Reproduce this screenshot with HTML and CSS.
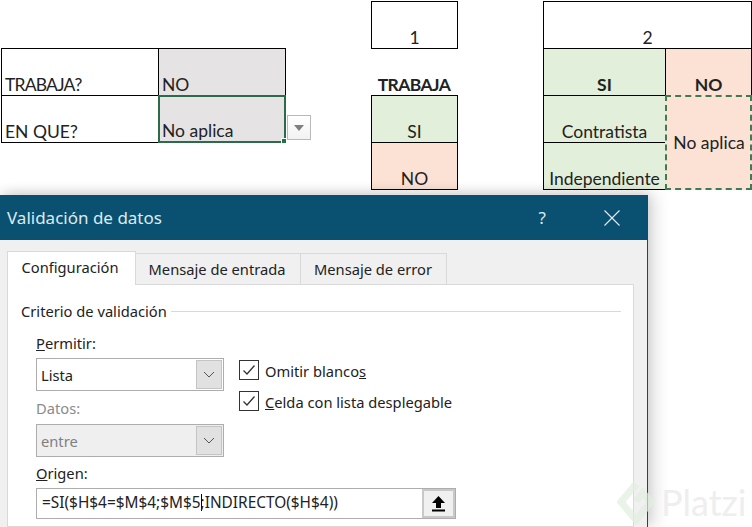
FILE: index.html
```html
<!DOCTYPE html>
<html lang="es">
<head>
<meta charset="utf-8">
<title>Validación de datos</title>
<link rel="stylesheet" href="styles.css">
</head>
<body>
<div class="page">
  <section class="sheet">
    <div class="cell c-num1">1</div>
    <div class="cell c-num2">2</div>

    <div class="cell caps c-a2">TRABAJA?</div>
    <div class="cell gray c-b2">NO</div>
    <div class="cell plain bold caps-bold c-d2">TRABAJA</div>
    <div class="cell green bold c-f2">SI</div>
    <div class="cell peach bold c-g2">NO</div>

    <div class="cell c-a3">EN QUE?</div>
    <div class="cell gray left selected c-b3">No aplica
      <span class="handle"></span>
      <span class="dropdown"><svg width="10" height="6" viewBox="0 0 10 6"><path d="M0 0h10L5 6z" fill="#7f7f7f"/></svg></span>
    </div>
    <div class="cell green c-d3">SI</div>
    <div class="cell green c-f3">Contratista</div>
    <div class="cell peach ants c-g3">No aplica</div>

    <div class="cell peach c-d4">NO</div>
    <div class="cell green c-f4">Independiente</div>
  </section>

  <section class="dialog">
    <header class="titlebar">
      <span class="title">Validación de datos</span>
      <span class="help">?</span>
      <svg class="close" width="16" height="16" viewBox="0 0 16 16"><path d="M.5.5l15 15M15.500.5l-15 15" stroke="#e4eef3" stroke-width="1.100" fill="none"/></svg>
    </header>
    <div class="tabs">
      <span class="tab active">Configuración</span>
      <span class="tab tab-input">Mensaje de entrada</span>
      <span class="tab tab-error">Mensaje de error</span>
    </div>
    <div class="panel">
      <div class="legend"><span>Criterio de validación</span><i class="rule"></i></div>
      <div class="form-top">
        <div class="col-left">
          <label class="label"><u>P</u>ermitir:</label>
          <div class="combo"><span>Lista</span><b class="combo-btn"><svg width="12" height="7" viewBox="0 0 12 7"><path d="M1 1l5 5 5-5" stroke="#555" fill="none"/></svg></b></div>
          <label class="label muted label-datos">Datos:</label>
          <div class="combo disabled"><span>entre</span><b class="combo-btn"><svg width="12" height="7" viewBox="0 0 12 7"><path d="M1 1l5 5 5-5" stroke="#555" fill="none"/></svg></b></div>
        </div>
        <div class="col-right">
          <div class="check"><span class="box"><svg width="14" height="12" viewBox="0 0 14 12"><path d="M1.500 6.500l3.500 3.500 7.500-8.500" stroke="#333" stroke-width="1.300" fill="none"/></svg></span><span class="check-text">Omitir blanco<u>s</u></span></div>
          <div class="check"><span class="box"><svg width="14" height="12" viewBox="0 0 14 12"><path d="M1.500 6.500l3.500 3.500 7.500-8.500" stroke="#333" stroke-width="1.300" fill="none"/></svg></span><span class="check-text"><u>C</u>elda con lista desplegable</span></div>
        </div>
      </div>
      <label class="label label-origen"><u>O</u>rigen:</label>
      <div class="source">
        <span class="source-text">=SI($H$4=$M$4;$M$5<i class="caret"></i>;INDIRECTO($H$4))</span>
        <b class="source-btn"><svg width="15" height="17" viewBox="0 0 15 17"><path d="M7.500 1L14 8H10v5H5V8H1z" fill="#000"/><path d="M1 15.500h13" stroke="#000" stroke-width="2"/></svg></b>
      </div>
    </div>
  </section>

  <div class="watermark">
    <svg width="38" height="44" viewBox="0 0 38 44"><path d="M19 4L4 22l15 18 15-18-8-9-7 8" stroke="#dfeedd" stroke-width="7" fill="none" opacity=".7"/></svg>
    <span>Platzi</span>
  </div>
</div>
</body>
</html>
```
FILE: styles.css
```css
* { box-sizing: border-box; }
html, body { margin: 0; height: 100%; background: #fff; overflow: hidden; }
.page { position: relative; width: 752px; height: 527px; overflow: hidden; }

/* Spreadsheet */
.sheet {
  height: 195px;
  padding: 1px 0 0 1px;
  display: grid;
  grid-template-columns: 157px 127px 86px 86px 86px 122px 86px;
  grid-template-rows: repeat(4, 47px);
  font-family: "Lato", sans-serif;
  font-size: 17.500px;
  color: #222;
}
.cell {
  position: relative;
  border: 1px solid #000;
  margin: 0 -1px -1px 0;
  display: flex;
  align-items: flex-end;
  justify-content: center;
  line-height: 20px;
}
.plain { border: 0; margin: 0; }
.bold { font-weight: 700; }
.caps { letter-spacing: -.8px; }
.caps-bold { letter-spacing: -.6px; }
.gray { background: #e5e3e4; }
.green { background: #e2efda; }
.peach { background: #fbe2d5; }
.c-a2, .c-a3, .c-b2, .left { justify-content: flex-start; padding-left: 3px; }
.c-num1 { grid-column: 4; grid-row: 1; }
.c-num2 { grid-column: 6 / 8; grid-row: 1; }
.c-a2 { grid-column: 1; grid-row: 2; }
.c-b2 { grid-column: 2; grid-row: 2; }
.c-d2 { grid-column: 4; grid-row: 2; }
.c-f2 { grid-column: 6; grid-row: 2; }
.c-g2 { grid-column: 7; grid-row: 2; }
.c-a3 { grid-column: 1; grid-row: 3; }
.c-b3 { grid-column: 2; grid-row: 3; }
.c-d3 { grid-column: 4; grid-row: 3; }
.c-f3 { grid-column: 6; grid-row: 3; }
.c-g3 { grid-column: 7; grid-row: 3 / 5; }
.c-d4 { grid-column: 4; grid-row: 4; }
.c-f4 { grid-column: 6; grid-row: 4; }
.selected { border: 2px solid #2b6b4a; padding-left: 2px; z-index: 1; }
.ants { border: 2px dashed #3f7a55; align-items: center; z-index: 1; padding-left: 1px; }
.handle {
  position: absolute; right: -3px; bottom: -3px;
  width: 6px; height: 6px; background: #217346; border: 1px solid #fff;
}
.dropdown {
  position: absolute; left: 127px; top: 18px;
  width: 24px; height: 25px;
  background: linear-gradient(#fff, #f2f2f2);
  border: 1px solid #b9b9b9;
  display: flex; align-items: center; justify-content: center;
}

/* Dialog */
.dialog {
  width: 648px;
  height: 332px;
  background: #f0f0f0;
  border-right: 1px solid #0a4f70;
  box-shadow: 0 -4px 10px rgba(0,0,0,.10), 8px 0 14px rgba(0,0,0,.12);
  font-family: "Noto Sans", sans-serif;
  font-size: 14.700px;
  color: #222;
  position: relative;
}
.titlebar {
  height: 45px;
  background: #0a5071;
  display: flex;
  align-items: center;
  padding: 0 27px 0 7px;
  color: #dcebf2;
}
.title { font-size: 17px; flex: 1; }
.help { font-size: 17px; margin-right: 58px; }
.tabs {
  display: flex;
  align-items: flex-end;
  height: 45px;
  padding-left: 7px;
  position: relative;
  z-index: 1;
  margin-bottom: -1px;
}
.tab {
  height: 32px;
  border: 1px solid #d9d9d9;
  border-left: 0;
  display: flex; align-items: center; justify-content: center;
}
.active {
  width: 129px; height: 34px;
  background: #fff;
  border: 1px solid #d9d9d9;
  border-bottom: 0;
  padding: 0 3px 3px 0;
}
.tab-input { width: 165px; padding-right: 2px; }
.tab-error { width: 146px; padding-right: 1px; }
.panel {
  margin: 0 13px 0 7px;
  height: 243px;
  background: #fff;
  border: 1px solid #d9d9d9;
  padding: 16px 12px 0 13px;
}
.legend { display: flex; align-items: center; gap: 4px; height: 20px; }
.rule { flex: 1; height: 1px; background: #d9d9d9; }
.form-top { display: flex; padding: 0 0 0 15px; margin-top: 12px; gap: 15px; }
.col-left { width: 188px; }
.label { display: block; height: 20px; line-height: 20px; }
.muted { color: #8a8a8a; }
.label-datos { margin-top: 7px; margin-bottom: 6px; }
.combo {
  height: 33px;
  margin-top: 5px;
  background: #fff;
  border: 1px solid #adadad;
  display: flex; align-items: center; justify-content: space-between;
  padding: 1px 1px 1px 4px;
}
.disabled { background: #efefef; color: #7f7f7f; margin-top: 0; }
.combo-btn {
  width: 26px; height: 29px;
  background: #e1e1e1;
  border: 1px solid #c4c4c4;
  display: flex; align-items: center; justify-content: center;
}
.col-right { padding-top: 26px; }
.check { display: flex; align-items: center; gap: 6px; height: 21px; margin-bottom: 10px; }
.check-text { position: relative; top: 1px; }
.box {
  width: 20px; height: 20px;
  border: 1px solid #333; background: #fff;
  display: flex; align-items: center; justify-content: center;
}
.label-origen { margin: 6px 0 0 15px; }
.source {
  margin: 5px 0 0 15px;
  width: 420px; height: 31px;
  border: 1px solid #adadad;
  display: flex; align-items: stretch;
}
.source-text { flex: 1; font-size: 15.400px; line-height: 28px; padding-left: 5px; white-space: nowrap; }
.caret { display: inline-block; width: 1px; height: 17px; margin-right: -1px; background: #000; vertical-align: -3px; }
.source-btn {
  width: 33px;
  background: #f0f0f0;
  border: 2px solid #c8c8c8;
  display: flex; align-items: center; justify-content: center;
}

/* Watermark */
.watermark {
  position: absolute; left: 617px; top: 480px;
  display: flex; align-items: center; gap: 6px;
  font-family: "Lato", sans-serif; font-size: 36px; color: #eeeeee;
}
```
